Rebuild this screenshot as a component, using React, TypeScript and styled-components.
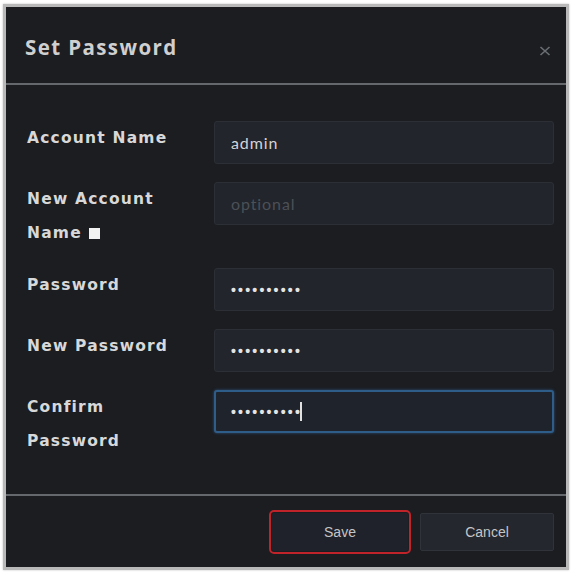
import React from "react";
import styled, { createGlobalStyle } from "styled-components";

const Global = createGlobalStyle`
  html, body { margin: 0; padding: 0; background: #ffffff; }
  * { box-sizing: border-box; }
`;

const Page = styled.div`
  width: 573px;
  height: 573px;
  padding: 4px 4px 3px 3px;
  background: #ffffff;
`;

const Frame = styled.div`
  width: 566px;
  height: 566px;
  border: 3px solid #b9b9b9;
  box-shadow: 0 0 2px rgba(0, 0, 0, 0.25);
`;

const Panel = styled.div`
  width: 560px;
  height: 560px;
  background: #1b1d21;
  display: flex;
  flex-direction: column;
`;

const Header = styled.div`
  height: 76px;
  display: flex;
  align-items: center;
  justify-content: space-between;
  padding: 4px 14px 0 19px;
`;

const Title = styled.div`
  font-family: "Open Sans", sans-serif;
  font-weight: 700;
  font-size: 20.5px;
  letter-spacing: 1.4px;
  color: #cfcfd0;
`;

const CloseButton = styled.div`
  width: 14px;
  height: 14px;
  display: flex;
  align-items: center;
  justify-content: center;
  margin-top: 7px;
`;

const Divider = styled.div`
  height: 2px;
  background: #65686d;
`;

const Body = styled.div`
  flex: 1;
  padding: 36px 12px 0 21px;
  display: flex;
  flex-direction: column;
  gap: 18px;
`;

const Row = styled.div`
  display: grid;
  grid-template-columns: 187px 1fr;
  align-items: start;
`;

const Label = styled.div`
  font-family: "DejaVu Sans", sans-serif;
  font-weight: 700;
  font-size: 15.5px;
  letter-spacing: 1.2px;
  line-height: 34px;
  color: #d8d8d9;
  margin-top: 0;
`;

const Check = styled.span`
  display: inline-block;
  width: 11px;
  height: 11px;
  background: #f2f2f2;
  margin-left: 7px;
  vertical-align: -1px;
`;

const Field = styled.div<{ $focused?: boolean }>`
  height: 43px;
  border-radius: 3px;
  background: ${(p) => (p.$focused ? "#1f232b" : "#22252b")};
  border: ${(p) => (p.$focused ? "2px solid #2f5d8a" : "1px solid #2c3036")};
  box-shadow: ${(p) => (p.$focused ? "0 0 3px rgba(60,120,180,0.6)" : "none")};
  display: flex;
  align-items: center;
  padding-left: ${(p) => (p.$focused ? "15px" : "16px")};
  font-family: "Lato", sans-serif;
  font-size: 16px;
  letter-spacing: 0.9px;
  color: #d4d4d5;
`;

const Placeholder = styled.span`
  color: #4c5057;
`;

const Dots = styled.span`
  font-family: "Liberation Sans", sans-serif;
  font-weight: 700;
  font-size: 14px;
  letter-spacing: 2.2px;
  color: #e4e4e4;
`;

const Caret = styled.span`
  display: inline-block;
  width: 1.5px;
  height: 19px;
  background: #e0e0e0;
  margin-left: -2px;
`;

const Footer = styled.div`
  height: 71px;
  display: flex;
  align-items: center;
  justify-content: flex-end;
  gap: 12px;
  padding-right: 12px;
`;

const Button = styled.button<{ $primary?: boolean }>`
  width: ${(p) => (p.$primary ? "136px" : "134px")};
  height: 38px;
  border-radius: 2px;
  background: ${(p) => (p.$primary ? "#1f222a" : "#24272d")};
  border: 1px solid ${(p) => (p.$primary ? "#1f222a" : "#30333a")};
  outline: ${(p) => (p.$primary ? "2px solid #c1232b" : "none")};
  outline-offset: 1px;
  font-family: "Liberation Sans", sans-serif;
  font-size: 14px;
  color: #c4c5c7;
  padding: 0;
  margin-top: ${(p) => (p.$primary ? "0" : "1px")};
`;

export default function App() {
  return (
    <Page>
      <Global />
      <Frame>
        <Panel>
          <Header>
            <Title>Set Password</Title>
            <CloseButton>
              <svg width="12" height="10" viewBox="0 0 12 10">
                <path d="M1.5 1 L10.5 9 M10.5 1 L1.5 9" stroke="#6b6e73" strokeWidth="1.6" />
              </svg>
            </CloseButton>
          </Header>
          <Divider />
          <Body>
            <Row>
              <Label>Account Name</Label>
              <Field>admin</Field>
            </Row>
            <Row>
              <Label>
                New Account
                <br />
                Name<Check />
              </Label>
              <Field>
                <Placeholder>optional</Placeholder>
              </Field>
            </Row>
            <Row>
              <Label>Password</Label>
              <Field>
                <Dots>••••••••••</Dots>
              </Field>
            </Row>
            <Row>
              <Label>New Password</Label>
              <Field>
                <Dots>••••••••••</Dots>
              </Field>
            </Row>
            <Row>
              <Label>
                Confirm
                <br />
                Password
              </Label>
              <Field $focused>
                <Dots>••••••••••</Dots>
                <Caret />
              </Field>
            </Row>
          </Body>
          <Divider />
          <Footer>
            <Button $primary>Save</Button>
            <Button>Cancel</Button>
          </Footer>
        </Panel>
      </Frame>
    </Page>
  );
}
